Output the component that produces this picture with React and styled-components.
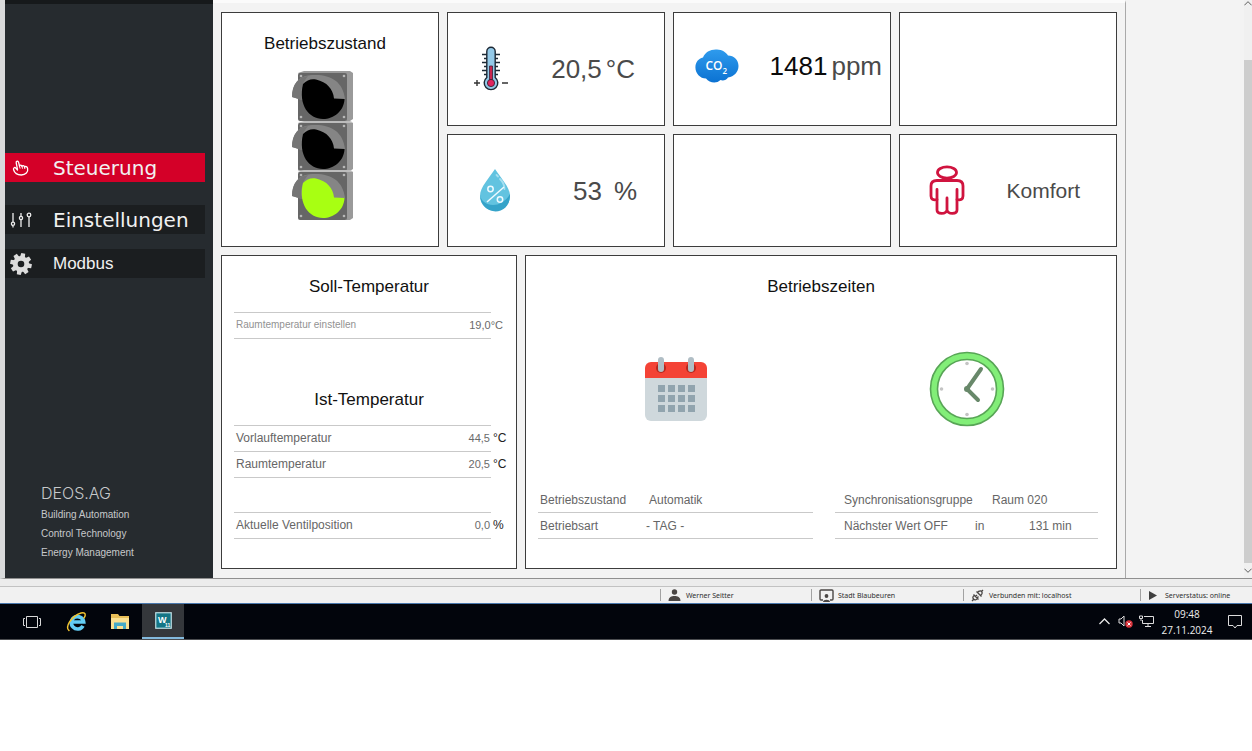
import React from 'react'
import styled, { createGlobalStyle } from 'styled-components'

const GlobalStyle = createGlobalStyle`
  * {
    box-sizing: border-box;
  }
  body {
    margin: 0;
    background: #fff;
    font-family: 'Liberation Sans', Arial, sans-serif;
  }
  dl, dd, dt, h2, p {
    margin: 0;
  }
  svg {
    display: block;
    flex: none;
  }
`

const Shell = styled.div`
  background: #ececec;
`

const Workspace = styled.div`
  display: flex;
  background: #f3f3f3;
  border-left: 5px solid #d9dadb;
  border-bottom: 1px solid #8f8f8f;
`

const Sidebar = styled.aside`
  display: flex;
  flex-direction: column;
  flex: none;
  width: 208px;
  padding: 149px 0 16px;
  background: #262b2f;
  border-top: 4px solid #16191b;
`

const NavList = styled.nav`
  display: flex;
  flex-direction: column;
  margin-right: 8px;
`

const NavLink = styled.a`
  display: flex;
  align-items: center;
  height: 29px;
  margin-bottom: ${({ $gap }) => $gap || 0}px;
  background: ${({ $active }) => ($active ? '#d40028' : '#1b1e20')};
  color: #f1f1f1;
  font-family: ${({ $wide }) => ($wide ? "'DejaVu Sans', Verdana" : "'Liberation Sans', Arial")}, sans-serif;
  font-size: ${({ $wide }) => ($wide ? 20 : 17)}px;
  text-decoration: none;
`

const NavIcon = styled.span`
  display: flex;
  justify-content: center;
  width: 32px;
  margin-right: 16px;
`

const Brand = styled.footer`
  margin-top: auto;
  padding-left: 36px;
  color: #c6c9cb;
  font-size: 10px;
  line-height: 19px;
`

const BrandName = styled.p`
  font-family: Inter, sans-serif;
  font-size: 16px;
  font-weight: 300;
  line-height: 24px;
`

const Dashboard = styled.main`
  display: flex;
  flex-direction: column;
  gap: 8px;
  flex: 1;
  padding: 9px 8px;
  border-top: 3px solid #fbfbfb;
  border-right: 1px solid #a9a9a9;
`

const SideSpace = styled.div`
  flex: none;
  width: 118px;
`

const ScrollTrack = styled.div`
  display: flex;
  flex-direction: column;
  align-items: center;
  flex: none;
  width: 8px;
  padding-bottom: 4px;
  background: #f0f0f0;
`

const ScrollThumb = styled.div`
  flex: 1;
  width: 100%;
  margin: 53px 0 4px;
  background: #cdcdcd;
`

const TopGrid = styled.div`
  display: grid;
  grid-template-columns: repeat(4, 1fr);
  grid-template-rows: 1fr 1fr;
  gap: 8px;
  min-height: 235px;
`

const BottomGrid = styled.div`
  display: grid;
  grid-template-columns: 296fr 592fr;
  gap: 8px;
`

const Card = styled.section`
  background: #fff;
  border: 1px solid #3c3c3c;
`

const LightCard = styled(Card)`
  grid-row: span 2;
  display: flex;
  flex-direction: column;
  align-items: center;
  gap: 17px;
  padding: 21px 10px 0 0;
`

const ListCard = styled(Card)`
  padding: 21px 0 29px;
`

const Tile = styled(Card)`
  display: flex;
  align-items: center;
  padding: 0 ${({ $right }) => $right || 0}px ${({ $bottom }) => $bottom || 0}px 0;
`

const TileIcon = styled.span`
  display: flex;
  justify-content: center;
  width: ${({ $wide }) => ($wide ? 94 : 86)}px;
`

const Reading = styled.p`
  display: flex;
  flex: 1;
  justify-content: flex-end;
  gap: ${({ $gap }) => $gap || 0}px;
  padding-top: 2px;
  color: #4a4a4a;
  font-size: ${({ $small }) => ($small ? 21 : 26)}px;
  white-space: nowrap;
`

const Amount = styled.span`
  color: ${({ $dark }) => ($dark ? '#0a0a0a' : 'inherit')};
`

const Title = styled.h2`
  color: #111;
  font-size: 17px;
  font-weight: 400;
  line-height: 20px;
  text-align: center;
`

const SecondTitle = styled(Title)`
  margin-top: 51px;
`

const ValueList = styled.dl`
  margin: ${({ $top }) => $top}px 25px 0 12px;
  border-bottom: 1px solid #c9c9c9;
`

const ValueRow = styled.div`
  display: flex;
  align-items: center;
  height: 26px;
  padding: 0 0 2px 2px;
  border-top: 1px solid #c9c9c9;
  color: ${({ $muted }) => ($muted ? '#929292' : '#666')};
  font-size: ${({ $muted }) => ($muted ? 10 : 12)}px;
`

const RowLabel = styled.dt`
  flex: 1;
`

const RowValue = styled.dd`
  display: flex;
  align-items: center;
  gap: ${({ $tight }) => ($tight ? 0 : 3)}px;
  margin-right: ${({ $tight }) => ($tight ? -12 : -16)}px;
  font-size: 11px;
  color: #6a6a6a;
`

const Unit = styled.span`
  width: ${({ $plain }) => ($plain ? 'auto' : '14px')};
  color: ${({ $plain }) => ($plain ? 'inherit' : '#222')};
  font-size: ${({ $plain }) => ($plain ? 11 : 12)}px;
`

const Columns = styled.div`
  display: grid;
  grid-template-columns: 275fr 263fr;
  gap: 22px;
  padding: 0 18px 0 12px;
`

const IconArea = styled.div`
  display: flex;
  align-items: center;
  justify-content: center;
  height: 190px;
  padding-bottom: 6px;
`

const TimeRow = styled.div`
  display: grid;
  grid-template-columns: ${({ $columns }) => $columns};
  align-items: center;
  height: 26px;
  padding-left: ${({ $indent }) => $indent}px;
  border-bottom: 1px solid #c9c9c9;
  color: #666;
  font-size: 12px;
  white-space: nowrap;
`

const StatusBar = styled.div`
  display: flex;
  justify-content: flex-end;
  margin-top: 7px;
  height: 17px;
  padding: 2px 0;
  background: #f1f1f1;
  border-top: 1px solid #c2c2c2;
`

const StatusItem = styled.div`
  display: flex;
  align-items: center;
  gap: ${({ $gap }) => $gap}px;
  width: ${({ $width }) => $width}px;
  padding-left: 7px;
  border-left: 1px solid #a2a2a2;
  color: #2e2e2e;
  font-family: 'Noto Sans', sans-serif;
  font-size: 7px;
  white-space: nowrap;
`

const Taskbar = styled.div`
  display: flex;
  justify-content: space-between;
  height: 37px;
  background: #02050c;
  border-top: 1px solid #4a78ad;
  border-bottom: 1px solid #4b4d50;
`

const TaskGroup = styled.div`
  display: flex;
  padding-left: ${({ $left }) => $left || 0}px;
`

const TaskButton = styled.button`
  display: flex;
  align-items: center;
  justify-content: center;
  width: ${({ $width }) => $width}px;
  padding: 0;
  border: 0;
  border-bottom: ${({ $active }) => ($active ? '2px solid #83b9dd' : '0')};
  background: ${({ $active }) => ($active ? '#34373b' : 'transparent')};
  color: #e8e8e8;
`

const Clock = styled.time`
  display: flex;
  flex-direction: column;
  justify-content: center;
  width: 60px;
  color: #eee;
  font-family: 'Open Sans', sans-serif;
  font-size: 10px;
  line-height: 16px;
  text-align: center;
`

function HandIcon() {
  return (
    <svg width="18" height="16" viewBox="0 0 18 16" fill="none" stroke="#fff" strokeWidth="1.3" strokeLinejoin="round" strokeLinecap="round">
      <path d="M5.500 9.500L4.200 2.800C3.900 1 6.200.6 6.600 2.300L7.500 6C7.800 4.700 9.600 4.700 10 6.300 10.400 5.200 12.200 5.300 12.500 6.900 13.500 6 15.200 6.700 15.600 8.300 16.500 12 13.500 15 9.300 15 5.500 15 2.500 13 1.600 9.800 1 7.700 2.800 6.800 3.900 8.200L5.500 10" />
      <path d="M7.500 6l.5 2.200M10 6.300l.4 2M12.500 6.900l.3 1.700" strokeWidth="1" />
    </svg>
  )
}

function SlidersIcon() {
  return (
    <svg width="22" height="18" viewBox="0 0 22 18" fill="none" stroke="#eee" strokeWidth="1.3">
      <path d="M3 2v9M3 15v1.500M11 2v3M11 8.600V16M19 6v10" />
      <circle cx="3" cy="12.800" r="1.600" />
      <circle cx="11" cy="7" r="1.600" />
      <circle cx="19" cy="4" r="1.800" />
    </svg>
  )
}

function GearIcon() {
  const teeth = [0, 45, 90, 135, 180, 225, 270, 315]
  return (
    <svg width="22" height="22" viewBox="0 0 22 22">
      {teeth.map((a) => (
        <path key={a} d="M8.500 4.500L9 .2h4l.5 4.300z" fill="#dcdcdc" transform={`rotate(${a + 12} 11 11)`} />
      ))}
      <circle cx="11" cy="11" r="5.700" fill="none" stroke="#dcdcdc" strokeWidth="4.800" />
    </svg>
  )
}

function Lamp({ y, color }) {
  return (
    <g transform={`translate(0 ${y})`}>
      <path d="M7 2L13 0h46l3 2v46l-3 2H55z" fill="#9a9a9a" />
      <rect x="7" y="2" width="49" height="48" rx="2" fill="#666" />
      <path d="M11 29L1 26C1 13 8 5.500 17 4.500 37 2 52 9 54 28L43 29z" fill="#858585" />
      <path d="M11 29L1 26C1 14 7 6 17 5c-6 7-8 14-6 24z" fill="#757575" />
      <path d="M12 13C16 9 20 7.500 25 8.500 36 11 42 18 43 27.500L53.500 28C53 40 43 48 32 48 18 48 7 34 12 13z" fill={color} />
      <g fill="#b7b7b7">
        <circle cx="10" cy="5" r="1.300" />
        <circle cx="53" cy="5" r="1.300" />
        <circle cx="10" cy="46" r="1.300" />
        <circle cx="53" cy="46" r="1.300" />
      </g>
    </g>
  )
}

function TrafficLight() {
  return (
    <svg width="68" height="150" viewBox="0 0 68 150">
      <Lamp y={0} color="#000" />
      <Lamp y={50} color="#000" />
      <Lamp y={99} color="#a8ff12" />
      <path d="M8 51h53M8 100h53" stroke="#dedede" strokeWidth="1" />
    </svg>
  )
}

function ThermometerIcon() {
  return (
    <svg width="36" height="46" viewBox="0 0 36 46">
      <path d="M9 8.500h18M11 12.500h14M9 16.500h18M11 20.500h14M9 24.500h18M11 28.500h14" stroke="#1c2a35" strokeWidth="1.300" />
      <path d="M13.800 5.500a4.200 4.200 0 0 1 8.400 0v26a6.800 6.800 0 1 1-8.400 0z" fill="#93c9e8" stroke="#1c2733" strokeWidth="1.400" />
      <path d="M16.500 20h3v14h-3z" fill="#c9254f" stroke="#3d1f35" strokeWidth=".8" />
      <circle cx="18" cy="37" r="3.600" fill="#e0245e" stroke="#3d1f35" strokeWidth=".9" />
      <path d="M1 37h6M4 34v6M29 37h6" stroke="#333" strokeWidth="1.400" />
    </svg>
  )
}

function DropIcon() {
  return (
    <svg width="32" height="44" viewBox="0 0 32 44">
      <path d="M16 1C21 9 31 19 31 28a15 15 0 0 1-30 0C1 19 11 9 16 1z" fill="#62c3e0" />
      <path d="M1 27c2 12 21 15 30-1 1 23-29 23-30 1z" fill="#35a3c9" />
      <path d="M17.500 7l1.500 1.500M21 11c3 3 4.500 6 4.500 10" fill="none" stroke="#a5dff0" strokeWidth="1.800" strokeLinecap="round" />
      <g fill="none" stroke="#eefaff" strokeWidth="1.500">
        <path d="M8 34L25 19" />
        <circle cx="11.500" cy="21" r="2.700" />
        <circle cx="21" cy="31.500" r="2.700" />
      </g>
    </svg>
  )
}

function Co2Icon() {
  return (
    <svg width="44" height="36" viewBox="0 0 44 36">
      <defs>
        <linearGradient id="co2" x1="0" y1="0" x2="0" y2="1">
          <stop offset="0" stopColor="#2f9bed" />
          <stop offset="1" stopColor="#0b72d2" />
        </linearGradient>
      </defs>
      <path d="M8 9.500C10 4 16 1 22 1.500c5 .3 9 2.500 11 6C39 7.500 43.500 12 43.500 18S39 28.500 33 29.500c-1.500 3-5.500 3.500-7.500 2.500-4 4-11 3-14.500-1.500C5 30.500 .5 25.500 .4 19.500 .4 14 3.500 10.500 8 9.500z" fill="url(#co2)" />
      <text x="10.500" y="22" fill="#fff" fontFamily="Open Sans, sans-serif" fontSize="12" fontWeight="600">
        CO<tspan fontSize="8" dy="4">2</tspan>
      </text>
    </svg>
  )
}

function PersonIcon() {
  return (
    <svg width="36" height="50" viewBox="0 0 36 50" fill="none" stroke="#d0143f" strokeWidth="2.800" strokeLinejoin="round" strokeLinecap="round">
      <ellipse cx="18" cy="7.500" rx="9.500" ry="5.600" />
      <path d="M8 34.500c-4 1-6-.5-6-3.500V21c0-4 2.500-5.500 6-5.500h20c3.500 0 6 1.500 6 5.500v10c0 3-2 4.500-6 3.500" />
      <path d="M8 24.500V45c0 4.500 9 4.500 10 0 1 4.500 10 4.500 10 0V24.500M18 33v12" />
    </svg>
  )
}

function CalendarIcon() {
  const cells = []
  for (let row = 0; row < 3; row++) {
    for (let col = 0; col < 4; col++) {
      cells.push(<rect key={`${row}${col}`} x={13 + col * 10} y={28 + row * 10} width="7" height="7" fill="#91a4ae" />)
    }
  }
  return (
    <svg width="62" height="64" viewBox="0 0 62 64">
      <path d="M0 20h62v38a6 6 0 0 1-6 6H6a6 6 0 0 1-6-6z" fill="#cfd8dc" />
      <path d="M6 5h50a6 6 0 0 1 6 6v10H0V11a6 6 0 0 1 6-6z" fill="#f44336" />
      <circle cx="16" cy="11" r="5" fill="#b7271d" />
      <circle cx="46" cy="11" r="5" fill="#b7271d" />
      <path d="M16 3v9M46 3v9" stroke="#b0bec5" strokeWidth="6" strokeLinecap="round" />
      {cells}
    </svg>
  )
}

function WallClockIcon() {
  return (
    <svg width="76" height="76" viewBox="0 0 76 76">
      <circle cx="38" cy="38" r="33" fill="#fff" stroke="#58a556" strokeWidth="8.600" />
      <circle cx="38" cy="38" r="33" fill="none" stroke="#82ee78" strokeWidth="5.400" />
      <g fill="#c4c4c4">
        <circle cx="38" cy="12.500" r="1.800" />
        <circle cx="38" cy="63.500" r="1.800" />
        <circle cx="12.500" cy="38" r="1.800" />
        <circle cx="63.500" cy="38" r="1.800" />
      </g>
      <path d="M52 18L38 38l11 11" fill="none" stroke="#68886a" strokeWidth="4" strokeLinecap="round" strokeLinejoin="round" />
      <circle cx="38" cy="38" r="3" fill="#68886a" />
    </svg>
  )
}

function UserIcon() {
  return (
    <svg width="13" height="12" viewBox="0 0 13 12" fill="#4a4644">
      <circle cx="6.500" cy="3" r="2.700" />
      <path d="M.5 12c0-4 3-5 6-5s6 1 6 5z" />
    </svg>
  )
}

function StationIcon() {
  return (
    <svg width="15" height="13" viewBox="0 0 15 13">
      <path d="M4 11H2a1 1 0 0 1-1-1V2a1 1 0 0 1 1-1h11a1 1 0 0 1 1 1v8a1 1 0 0 1-1 1h-2" fill="none" stroke="#4a4644" strokeWidth="1.400" />
      <circle cx="7.500" cy="7" r="1.900" fill="#4a4644" />
      <path d="M4 13c0-3 7-3 7 0z" fill="#4a4644" />
    </svg>
  )
}

function PlugIcon() {
  return (
    <svg width="13" height="13" viewBox="0 0 13 13" fill="none" stroke="#4a4644" strokeWidth="1.300">
      <path d="M1 12l2-2M12 1l-2 2M6.500 3.500l3 3c3-2 1.500-5-.5-4.500-1 0-2 .7-2.500 1.500zM3.500 6.500l3 3c-1 1.500-3 1.800-4 .5s-1-2.500 1-3.500zM4.500 7.500L6 6M6 9l1.500-1.500M5.500 2.500l5 5M2.500 5.500l5 5" />
    </svg>
  )
}

function PlayIcon() {
  return (
    <svg width="9" height="9" viewBox="0 0 9 9">
      <path d="M1 0l8 4.500L1 9z" fill="#3f3f3f" />
    </svg>
  )
}

function TaskViewIcon() {
  return (
    <svg width="18" height="14" viewBox="0 0 18 14" fill="none" stroke="#d8d8d8">
      <path d="M3.500 1.500h11v11h-11zM2 3.500H.5v7H2M16 3.500h1.500v7H16" />
    </svg>
  )
}

function ExplorerIcon() {
  return (
    <svg width="21" height="21" viewBox="0 0 21 21" fill="none">
      <path d="M17 14.800a6.200 6.200 0 1 1 .7-3.800H6.500" stroke="#62cdf5" strokeWidth="3.600" />
      <path d="M3 19.500C-1.500 17 5 5 15 2 20 .8 20 4 18 7" stroke="#f2c531" strokeWidth="1.500" strokeLinecap="round" />
    </svg>
  )
}

function FolderIcon() {
  return (
    <svg width="20" height="17" viewBox="0 0 20 17">
      <path d="M1 1h7l1.500 2H19v13H1z" fill="#e9bf58" />
      <path d="M1 5h18v11H1z" fill="#fbe192" />
      <path d="M4 16V9.500h12V16h-3v-3H7v3z" fill="#46abc7" />
    </svg>
  )
}

function W11Icon() {
  return (
    <svg width="17" height="17" viewBox="0 0 17 17">
      <rect x=".75" y=".75" width="15.500" height="15.500" fill="#147686" stroke="#bfe0e5" strokeWidth="1.200" />
      <text x="3" y="11" fill="#fff" fontFamily="Liberation Sans, sans-serif" fontSize="9" fontWeight="700">W</text>
      <text x="10" y="15" fill="#fff" fontFamily="Liberation Sans, sans-serif" fontSize="5" fontWeight="700">11</text>
    </svg>
  )
}

function ChevronIcon({ down, color = '#e8e8e8', size = 11 }) {
  return (
    <svg width={size} height="7" viewBox="0 0 11 7" fill="none" stroke={color} strokeWidth="1.300">
      <path d={down ? 'M.5 1l5 5 5-5' : 'M.5 6l5-5 5 5'} />
    </svg>
  )
}

function SpeakerIcon() {
  return (
    <svg width="15" height="13" viewBox="0 0 15 13">
      <path d="M1 4h2l3-3v10L3 8H1z" fill="none" stroke="#ddd" />
      <circle cx="11" cy="9" r="3.700" fill="#d9353d" />
      <path d="M9.500 7.500l3 3M12.500 7.500l-3 3" stroke="#fff" />
    </svg>
  )
}

function NetworkIcon() {
  return (
    <svg width="15" height="13" viewBox="0 0 15 13" fill="none" stroke="#ddd">
      <path d="M5 1.500h9.500v7H3.500V5M9 8.500v3M6 11.500h6M.5 1h3v2.500h-3zM2 3.500V6" />
    </svg>
  )
}

function NoticeIcon() {
  return (
    <svg width="14" height="14" viewBox="0 0 14 14" fill="none" stroke="#ddd">
      <path d="M.5.500h13v10H9l-2 2.500-2-2.500H.5z" />
    </svg>
  )
}

function ListRow({ label, value, unit, muted }) {
  return (
    <ValueRow $muted={muted}>
      <RowLabel>{label}</RowLabel>
      <RowValue $tight={muted}>
        <span>{value}</span>
        <Unit $plain={muted}>{unit}</Unit>
      </RowValue>
    </ValueRow>
  )
}

export default function App() {
  return (
    <>
      <GlobalStyle />
      <Shell>
        <Workspace>
          <Sidebar>
            <NavList>
              <NavLink href="#steuerung" $active $wide $gap={23}>
                <NavIcon><HandIcon /></NavIcon>
                Steuerung
              </NavLink>
              <NavLink href="#einstellungen" $wide $gap={15}>
                <NavIcon><SlidersIcon /></NavIcon>
                Einstellungen
              </NavLink>
              <NavLink href="#modbus">
                <NavIcon><GearIcon /></NavIcon>
                Modbus
              </NavLink>
            </NavList>
            <Brand>
              <BrandName>DEOS.AG</BrandName>
              <p>Building Automation</p>
              <p>Control Technology</p>
              <p>Energy Management</p>
            </Brand>
          </Sidebar>

          <Dashboard>
            <TopGrid>
              <LightCard>
                <Title>Betriebszustand</Title>
                <TrafficLight />
              </LightCard>
              <Tile $right={29}>
                <TileIcon><ThermometerIcon /></TileIcon>
                <Reading $gap={4}>
                  <Amount>20,5</Amount>
                  <span>°C</span>
                </Reading>
              </Tile>
              <Tile $right={8} $bottom={6}>
                <TileIcon><Co2Icon /></TileIcon>
                <Reading $gap={4}>
                  <Amount $dark>1481</Amount>
                  <span>ppm</span>
                </Reading>
              </Tile>
              <Tile />
              <Tile $right={27}>
                <TileIcon $wide><DropIcon /></TileIcon>
                <Reading $gap={12}>
                  <Amount>53</Amount>
                  <span>%</span>
                </Reading>
              </Tile>
              <Tile />
              <Tile $right={36}>
                <TileIcon $wide><PersonIcon /></TileIcon>
                <Reading $small>Komfort</Reading>
              </Tile>
            </TopGrid>

            <BottomGrid>
              <ListCard>
                <Title>Soll-Temperatur</Title>
                <ValueList $top={15}>
                  <ListRow label="Raumtemperatur einstellen" value="19,0" unit="°C" muted />
                </ValueList>
                <SecondTitle>Ist-Temperatur</SecondTitle>
                <ValueList $top={15}>
                  <ListRow label="Vorlauftemperatur" value="44,5" unit="°C" />
                  <ListRow label="Raumtemperatur" value="20,5" unit="°C" />
                </ValueList>
                <ValueList $top={34}>
                  <ListRow label="Aktuelle Ventilposition" value="0,0" unit="%" />
                </ValueList>
              </ListCard>

              <ListCard>
                <Title>Betriebszeiten</Title>
                <Columns>
                  <div>
                    <IconArea><CalendarIcon /></IconArea>
                    <dl>
                      <TimeRow $indent={2} $columns="109px 1fr">
                        <dt>Betriebszustand</dt>
                        <dd>Automatik</dd>
                      </TimeRow>
                      <TimeRow $indent={2} $columns="106px 1fr">
                        <dt>Betriebsart</dt>
                        <dd>- TAG -</dd>
                      </TimeRow>
                    </dl>
                  </div>
                  <div>
                    <IconArea><WallClockIcon /></IconArea>
                    <dl>
                      <TimeRow $indent={9} $columns="148px 1fr">
                        <dt>Synchronisationsgruppe</dt>
                        <dd>Raum 020</dd>
                      </TimeRow>
                      <TimeRow $indent={9} $columns="131px 54px 1fr">
                        <dt>Nächster Wert OFF</dt>
                        <dd>in</dd>
                        <dd>131 min</dd>
                      </TimeRow>
                    </dl>
                  </div>
                </Columns>
              </ListCard>
            </BottomGrid>
          </Dashboard>

          <SideSpace />
          <ScrollTrack>
            <ChevronIcon color="#555" size={8} />
            <ScrollThumb />
            <ChevronIcon down color="#555" size={8} />
          </ScrollTrack>
        </Workspace>

        <StatusBar>
          <StatusItem $width={151} $gap={5}><UserIcon />Werner Seitter</StatusItem>
          <StatusItem $width={152} $gap={4}><StationIcon />Stadt Blaubeuren</StatusItem>
          <StatusItem $width={177} $gap={5}><PlugIcon />Verbunden mit: localhost</StatusItem>
          <StatusItem $width={112} $gap={8}><PlayIcon />Serverstatus: online</StatusItem>
        </StatusBar>
      </Shell>

      <Taskbar>
        <TaskGroup $left={10}>
          <TaskButton $width={44} aria-label="Task View"><TaskViewIcon /></TaskButton>
          <TaskButton $width={44} aria-label="Internet Explorer"><ExplorerIcon /></TaskButton>
          <TaskButton $width={44} aria-label="Explorer"><FolderIcon /></TaskButton>
          <TaskButton $width={42} $active aria-label="W11"><W11Icon /></TaskButton>
        </TaskGroup>
        <TaskGroup>
          <TaskButton $width={21} aria-label="Tray"><ChevronIcon /></TaskButton>
          <TaskButton $width={21} aria-label="Volume"><SpeakerIcon /></TaskButton>
          <TaskButton $width={21} aria-label="Network"><NetworkIcon /></TaskButton>
          <Clock>
            <span>09:48</span>
            <span>27.11.2024</span>
          </Clock>
          <TaskButton $width={35} aria-label="Notifications"><NoticeIcon /></TaskButton>
        </TaskGroup>
      </Taskbar>
    </>
  )
}
